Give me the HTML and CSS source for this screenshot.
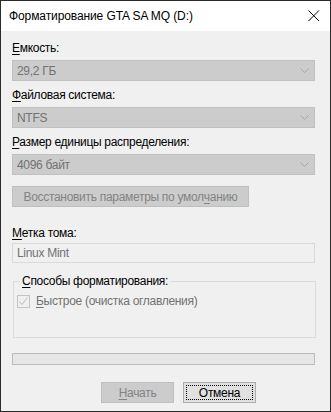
FILE: index.html
```html
<!DOCTYPE html>
<html lang="ru">
<head>
<meta charset="utf-8">
<title>Форматирование</title>
<link rel="stylesheet" href="styles.css">
</head>
<body>
<div class="window">
  <div class="titlebar">
    <span class="title">Форматирование GTA SA MQ (D:)</span>
    <svg class="close" width="12" height="12" viewBox="0 0 12 12"><path d="M0.5 0.5 L11 11 M11 0.5 L0.5 11" stroke="#000" stroke-width="1" fill="none"/></svg>
  </div>
  <div class="content">
    <div class="label l1"><u>Е</u>мкость:</div>
    <div class="combo c1"><span>29,2 ГБ</span><svg class="chev" width="9" height="5" viewBox="0 0 9 5"><path d="M0.5 0.5 L4.5 4.5 L8.5 0.5" stroke="#a8a8a8" fill="none"/></svg></div>
    <div class="label l2"><u>Ф</u>айловая система:</div>
    <div class="combo c2"><span>NTFS</span><svg class="chev" width="9" height="5" viewBox="0 0 9 5"><path d="M0.5 0.5 L4.5 4.5 L8.5 0.5" stroke="#a8a8a8" fill="none"/></svg></div>
    <div class="label l3"><u>Р</u>азмер единицы распределения:</div>
    <div class="combo c3"><span>4096 байт</span><svg class="chev" width="9" height="5" viewBox="0 0 9 5"><path d="M0.5 0.5 L4.5 4.5 L8.5 0.5" stroke="#a8a8a8" fill="none"/></svg></div>
    <div class="btn restore">Восстановить параметры по умол<u>ч</u>анию</div>
    <div class="label l4"><u>М</u>етка тома:</div>
    <div class="textbox">Linux Mint</div>
    <div class="group">
      <div class="legend"><u>С</u>пособы форматирования:</div>
      <div class="check-row">
        <span class="check"><svg width="11" height="11" viewBox="0 0 11 11"><path d="M1.5 5.5 L4 8.5 L9.5 1.5" stroke="#bcbcbc" stroke-width="1" fill="none"/></svg></span>
        <span class="check-label"><u>Б</u>ыстрое (очистка оглавления)</span>
      </div>
    </div>
    <div class="progress"></div>
    <div class="buttons">
      <div class="btn start"><u>Н</u>ачать</div>
      <div class="btn cancel"><span class="focus">Отмена</span></div>
    </div>
  </div>
</div>
</body>
</html>
```
FILE: styles.css
```css
html, body {
  margin: 0;
  padding: 0;
  background: #f0f0f0;
}
.window {
  width: 331px;
  height: 412px;
  box-sizing: border-box;
  border: 1px solid #2b2b2b;
  background: #f0f0f0;
  font-family: "Liberation Sans", Arial, sans-serif;
  font-size: 12px;
  color: #000;
  overflow: hidden;
}
.titlebar {
  height: 30px;
  background: #ffffff;
  display: flex;
  align-items: center;
  justify-content: space-between;
  padding: 0 10px 0 8px;
}
.title {
  font-size: 12px;
  line-height: 15px;
  padding-top: 1px;
  letter-spacing: -0.1px;
}
.close {
  display: block;
}
.content {
  display: flex;
  flex-direction: column;
  align-items: flex-start;
  padding-left: 11px;
  letter-spacing: -0.3px;
}
u {
  text-decoration: underline;
  text-underline-offset: 2px;
}
.label {
  line-height: 15px;
  height: 15px;
}
.l1 { margin-top: 10px; }
.l2 { margin-top: 7px; }
.l3 { margin-top: 7px; }
.combo {
  margin-top: 4px;
  width: 303px;
  height: 21px;
  box-sizing: border-box;
  background: #cccccc;
  border: 1px solid #c0c0c0;
  display: flex;
  align-items: center;
  justify-content: space-between;
  padding: 0 5px 0 4px;
  color: #727272;
}
.chev { display: block; }
.btn {
  box-sizing: border-box;
  display: flex;
  align-items: center;
  justify-content: center;
  height: 21px;
}
.restore {
  margin-top: 11px;
  width: 237px;
  background: #cccccc;
  border: 1px solid #bfbfbf;
  color: #838383;
}
.l4 { margin-top: 19px; }
.textbox {
  margin-top: 2px;
  width: 303px;
  height: 20px;
  box-sizing: border-box;
  border: 1px solid #d9d9d9;
  background: #f0f0f0;
  color: #727272;
  padding-left: 4px;
  line-height: 18px;
}
.group {
  margin-top: 18px;
  width: 303px;
  height: 57px;
  box-sizing: border-box;
  border: 1px solid #dcdcdc;
  position: relative;
  margin-left: 1px;
}
.legend {
  position: absolute;
  top: -8px;
  left: 6px;
  padding: 0 2px;
  background: #f0f0f0;
  line-height: 15px;
}
.check-row {
  display: flex;
  align-items: center;
  margin-top: 12px;
  margin-left: 3px;
}
.check {
  width: 13px;
  height: 13px;
  box-sizing: border-box;
  border: 1px solid #c4c4c4;
  display: flex;
  align-items: center;
  justify-content: center;
}
.check svg { display: block; }
.check-label {
  margin-left: 6px;
  color: #727272;
  line-height: 15px;
}
.progress {
  margin-top: 15px;
  width: 303px;
  height: 12px;
  box-sizing: border-box;
  border: 1px solid #bcbcbc;
  background: #e6e6e6;
}
.buttons {
  display: flex;
  gap: 9px;
  margin-top: 17px;
  margin-left: 89px;
}
.start {
  width: 73px;
  background: #cccccc;
  border: 1px solid #bfbfbf;
  color: #838383;
}
.cancel {
  width: 73px;
  background: #e1e1e1;
  border: 1px solid #adadad;
  padding: 2px;
}
.focus {
  flex: 1;
  align-self: stretch;
  border: 1px dotted #000;
  display: flex;
  align-items: center;
  justify-content: center;
}
```
